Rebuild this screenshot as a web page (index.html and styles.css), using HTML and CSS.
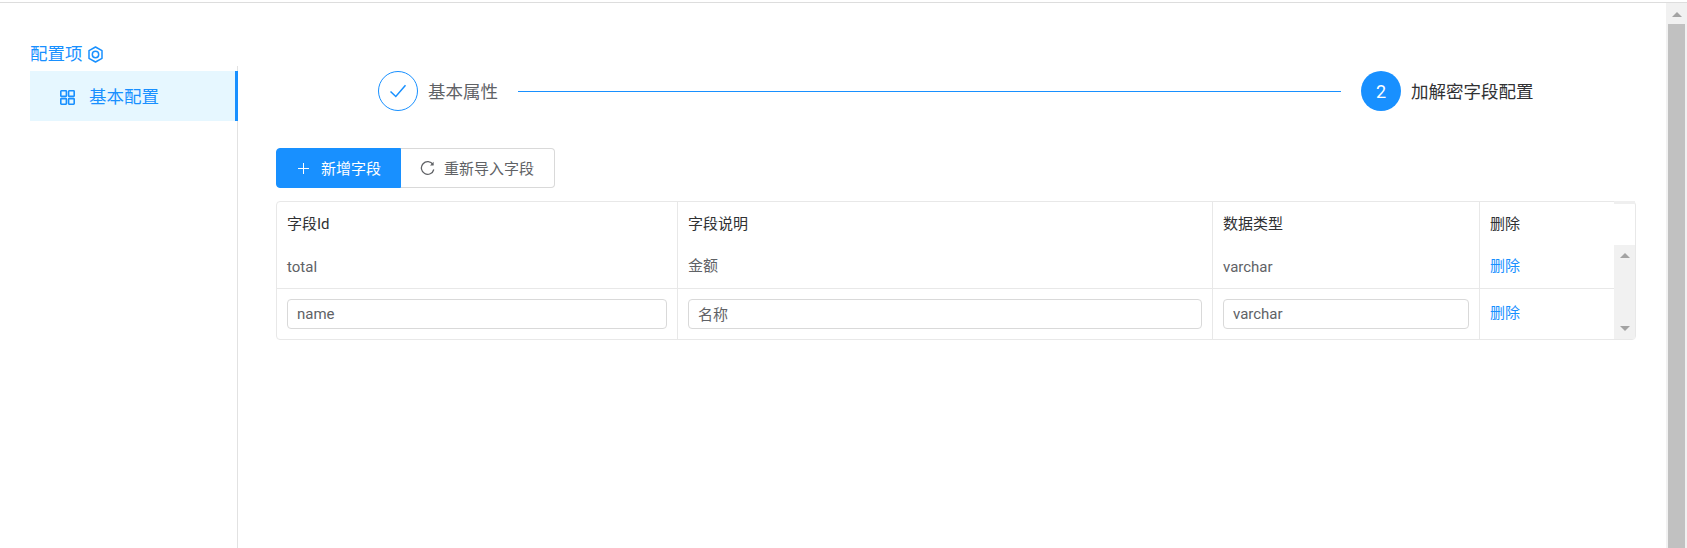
FILE: index.html
```html
<!DOCTYPE html>
<html lang="zh-CN">
<head>
<meta charset="utf-8">
<title>加解密字段配置</title>
<link rel="stylesheet" href="styles.css">
</head>
<body>
<div class="topline"></div>
<div class="page">
  <aside class="sidebar">
    <div class="side-title">配置项
      <svg class="hex" width="15" height="17" viewBox="0 0 15 17"><path d="M7.5 1 L14 4.7 V12.3 L7.5 16 L1 12.3 V4.7 Z" fill="none" stroke="#1890ff" stroke-width="1.5" stroke-linejoin="round"/><circle cx="7.5" cy="8.5" r="3.2" fill="none" stroke="#1890ff" stroke-width="1.5"/></svg>
    </div>
    <nav class="side-nav">
      <div class="menu-item">
        <svg width="15" height="15" viewBox="0 0 15 15"><g fill="none" stroke="#1890ff" stroke-width="1.6"><rect x=".8" y=".8" width="5.6" height="5.6" rx=".6"/><rect x="8.6" y=".8" width="5.6" height="5.6" rx=".6"/><rect x=".8" y="8.6" width="5.6" height="5.6" rx=".6"/><rect x="8.6" y="8.6" width="5.6" height="5.6" rx=".6"/></g></svg>
        <span class="menu-text">基本配置</span>
      </div>
    </nav>
  </aside>
  <main class="main">
    <div class="steps">
      <div class="step-icon done">
        <svg width="18" height="14" viewBox="0 0 18 14"><path d="M1.5 7.5 L6.8 12.5 L16.5 1.2" fill="none" stroke="#1890ff" stroke-width="1.5"/></svg>
      </div>
      <span class="step-label done-label">基本属性</span>
      <div class="step-line"></div>
      <div class="step-icon active">2</div>
      <span class="step-label active-label">加解密字段配置</span>
    </div>
    <div class="actions">
      <button class="btn btn-primary">
        <svg width="11" height="11" viewBox="0 0 11 11"><path d="M5.5 0 V11 M0 5.5 H11" stroke="#fff" stroke-width="1"/></svg>
        <span class="btn-text">新增字段</span>
      </button>
      <button class="btn btn-default">
        <svg width="15" height="15" viewBox="0 0 15 15"><path d="M13 3.6 A6.3 6.3 0 1 0 13.8 8.5" fill="none" stroke="#606266" stroke-width="1.3"/><path d="M13.6 0.8 V4.4 H10" fill="#606266"/></svg>
        <span class="btn-text">重新导入字段</span>
      </button>
    </div>
    <div class="table-wrap">
      <table class="fields">
        <colgroup>
          <col class="col-id"><col class="col-desc"><col class="col-type"><col>
        </colgroup>
        <thead>
          <tr><th>字段Id</th><th>字段说明</th><th>数据类型</th><th>删除</th></tr>
        </thead>
        <tbody>
          <tr class="row-text"><td>total</td><td class="cjk">金额</td><td>varchar</td><td class="cjk"><a class="del">删除</a></td></tr>
          <tr class="row-edit">
            <td><input class="field" value="name"></td>
            <td><input class="field" value="名称"></td>
            <td><input class="field" value="varchar"></td>
            <td class="cjk"><a class="del">删除</a></td>
          </tr>
        </tbody>
      </table>
      <div class="corner"></div>
      <div class="inner-scroll">
        <i class="arrow up"></i>
        <i class="arrow down"></i>
      </div>
    </div>
  </main>
  <div class="page-scroll">
    <div class="ps-head"><i class="arrow up"></i></div>
    <div class="ps-thumb"></div>
  </div>
</div>
</body>
</html>
```
FILE: styles.css
```css
* { box-sizing: border-box; }
html, body { margin: 0; height: 548px; overflow: hidden; background: #fff; }
body {
  font-family: Roboto, "Noto Sans CJK SC", sans-serif;
  font-size: 15px;
  color: #606266;
  padding-top: 2px;
}
.topline { height: 1px; background: #ddd; }
.page { display: flex; height: 545px; }

/* sidebar */
.sidebar { width: 238px; flex: none; display: flex; flex-direction: column; padding-left: 30px; }
.side-title {
  margin-top: 39px; height: 24px; line-height: 24px;
  font-size: 17.5px; color: #1890ff;
  display: flex; align-items: center; gap: 5px;
}
.side-nav { flex: 1; border-right: 1px solid #e2e2e2; padding-top: 5px; }
.menu-item {
  height: 50px; background: #e6f7ff; border-right: 3px solid #1890ff;
  margin-right: -1px; padding-left: 30px;
  display: flex; align-items: center; gap: 14px;
  font-size: 17.5px; color: #1890ff;
}
.menu-item svg { margin-top: 3px; }
.menu-text { padding-bottom: 2px; }

/* main */
.main { flex: 1; min-width: 0; padding: 68px 30px 0 38px; }
.steps { display: flex; align-items: center; padding-left: 102px; height: 40px; }
.step-icon {
  width: 40px; height: 40px; border-radius: 50%; flex: none;
  display: flex; align-items: center; justify-content: center;
  font-size: 18px;
}
.step-icon.done { border: 1px solid #1890ff; background: #fff; }
.step-icon.active { background: #1890ff; color: #fff; }
.step-label { font-size: 17.5px; margin-left: 10px; padding-bottom: 2px; white-space: nowrap; }
.done-label { color: #606266; }
.active-label { color: #303133; }
.step-line { flex: none; width: 823px; height: 1px; background: #1890ff; margin: 0 20px; }

.actions { display: flex; margin-top: 37px; }
.btn {
  height: 40px; font: inherit; display: flex; align-items: center;
  cursor: pointer; padding: 0;
}
.btn-text { padding-bottom: 2px; }
.btn-primary {
  width: 125px; padding-left: 21px; gap: 12px; color: #fff;
  background: #1890ff; border: 1px solid #1890ff; border-radius: 4px 0 0 4px;
}
.btn-default {
  width: 154px; padding-left: 19px; gap: 9px; color: #606266;
  background: #fff; border: 1px solid #d9d9d9; border-left: 0; border-radius: 0 4px 4px 0;
}

/* table */
.table-wrap {
  position: relative; margin-top: 13px; width: 1360px; height: 139px;
  border: 1px solid #e8e8e8; border-radius: 4px;
}
.fields { width: 100%; border-collapse: separate; border-spacing: 0; table-layout: fixed; }
.col-id { width: 401px; }
.col-desc { width: 535px; }
.col-type { width: 267px; }
.fields th, .fields td { padding: 0 10px; text-align: left; border-right: 1px solid #e8e8e8; }
.fields th:last-child, .fields td:last-child { border-right: 0; }
.fields th { height: 43px; padding-bottom: 3px; font-weight: 400; color: #303133; }
.fields .row-text td { height: 44px; padding-bottom: 0; border-bottom: 1px solid #e8e8e8; }
.fields .row-edit td { height: 50px; padding-bottom: 1px; }
.fields .row-text .cjk { padding-bottom: 4px; }
.fields .row-edit .cjk { padding-bottom: 5px; }
.field {
  display: block; width: 100%; height: 30px; padding: 0 9px;
  border: 1px solid #d9d9d9; border-radius: 4px; outline: 0;
  font: inherit; color: #606266; background: #fff;
}
.del { color: #1890ff; }

.corner { position: absolute; top: -1px; right: 0; width: 21px; height: 3px; background: #efefef; }
.inner-scroll {
  position: absolute; right: 0; top: 43px; bottom: 0; width: 21px;
  background: #f1f1f1; display: flex; flex-direction: column;
  align-items: center; justify-content: space-between; padding: 8px 0;
}

.arrow { display: block; width: 0; height: 0; border-left: 5px solid transparent; border-right: 5px solid transparent; }
.arrow.up { border-bottom: 5px solid #a3a3a3; }
.arrow.down { border-top: 5px solid #a3a3a3; }

/* page scrollbar */
.page-scroll { width: 21px; flex: none; background: #f1f1f1; display: flex; flex-direction: column; align-items: center; }
.ps-head { height: 21px; padding-top: 9px; }
.ps-thumb { width: 17px; flex: 1; background: #c1c1c1; }
```
